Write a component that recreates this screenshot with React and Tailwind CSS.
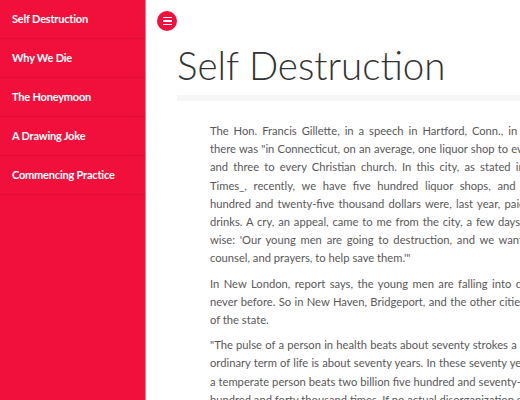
import React from "react";

const menu = [
  "Self Destruction",
  "Why We Die",
  "The Honeymoon",
  "A Drawing Joke",
  "Commencing Practice",
];

// cada línea con su espaciado, imitando el texto justificado del original
const paragraphs = [
  [
    ["The Hon. Francis Gillette, in a speech in Hartford, Conn., in 1871, said", "[word-spacing:2.1px]"],
    ["there was \"in Connecticut, on an average, one liquor shop to every forty", "[word-spacing:0.35px]"],
    ["and three to every Christian church. In this city, as stated in the", "[word-spacing:2.3px]"],
    ["Times_, recently, we have five hundred liquor shops, and one", "[word-spacing:3.8px]"],
    ["hundred and twenty-five thousand dollars were, last year, paid for", "[word-spacing:1.4px]"],
    ["drinks. A cry, an appeal, came to me from the city, a few days since,", "[word-spacing:1px]"],
    ["wise: 'Our young men are going to destruction, and we want your help,", "[word-spacing:1.9px]"],
    ["counsel, and prayers, to help save them.'\"", ""],
  ],
  [
    ["In New London, report says, the young men are falling into drunkenness", "[word-spacing:1.6px]"],
    ["never before. So in New Haven, Bridgeport, and the other cities and towns", "[word-spacing:0.5px]"],
    ["of the state.", ""],
  ],
  [
    ["\"The pulse of a person in health beats about seventy strokes a minute,", "[word-spacing:0.4px]"],
    ["ordinary term of life is about seventy years. In these seventy years the", "[word-spacing:0.35px]"],
    ["a temperate person beats two billion five hundred and seventy-nine million", "[word-spacing:0.1px]"],
    ["hundred and forty thousand times. If no actual disorganization should", ""],
  ],
];

export default function App() {
  return (
    <div className="flex h-[400px] w-[520px] overflow-hidden bg-white font-['Lato','Liberation_Sans',sans-serif]">
      {/* Barra lateral */}
      <nav className="w-[146px] shrink-0 border-r border-[#f5738c] bg-[#f0103b]">
        {menu.map((item) => (
          <div
            key={item}
            className="flex h-[39px] items-center border-b border-[#e00d36] pl-3 text-[11px] font-bold tracking-[-0.2px] text-white"
          >
            {item}
          </div>
        ))}
      </nav>

      {/* Contenido */}
      <main className="w-[900px] shrink-0">
        <div className="pl-[11px] pt-[11px]">
          <button className="flex h-5 w-5 items-center justify-center rounded-full bg-[#f0103b]">
            <span className="flex flex-col gap-[2px]">
              <span className="block h-[1.5px] w-[9px] bg-white" />
              <span className="block h-[1.5px] w-[9px] bg-white" />
              <span className="block h-[1.5px] w-[9px] bg-white" />
            </span>
          </button>
        </div>
        <div className="pl-[31px]">
          <h1 className="mt-[10px] text-[38.5px] font-light leading-[48px] text-[#333]">
            Self Destruction
          </h1>
          <div className="mt-[6px] h-[6px] w-[500px] bg-[#f6f6f6]" />
        </div>
        <div className="pl-[64px] pt-[21px]">
          {paragraphs.map((lines, i) => (
            <div key={i} className="mb-[7px] text-[11.2px] leading-[18.2px] text-[#585858]">
              {lines.map(([text, spacing], j) => (
                <div key={j} className={"whitespace-nowrap " + spacing}>
                  {text}
                </div>
              ))}
            </div>
          ))}
        </div>
      </main>
    </div>
  );
}
